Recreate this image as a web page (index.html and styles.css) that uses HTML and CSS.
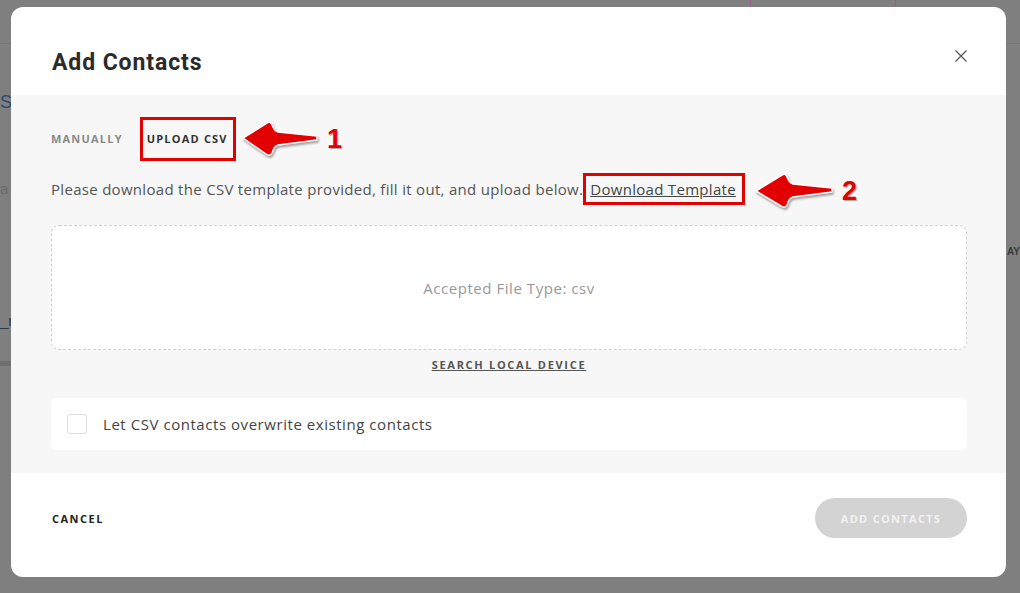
FILE: index.html
```html
<!DOCTYPE html>
<html lang="en">
<head>
<meta charset="utf-8">
<title>Add Contacts</title>
<link rel="stylesheet" href="styles.css">
</head>
<body>
<div class="backdrop">
  <div class="bg-topbar"></div>
  <div class="bg-circle"></div>
  <div class="bg-s">S</div>
  <div class="bg-a">a</div>
  <div class="bg-r">_r</div>
  <div class="bg-band"></div>
  <div class="bg-ay">AY</div>

  <div class="modal">
    <header class="modal-header">
      <h1 class="title">Add Contacts</h1>
      <button class="close" aria-label="Close">
        <svg width="12" height="12" viewBox="0 0 12 12"><path d="M0.5 0.5 L11.5 11.5 M11.5 0.5 L0.5 11.5" stroke="#555" stroke-width="1.2" fill="none"/></svg>
      </button>
    </header>

    <section class="modal-body">
      <div class="tabs">
        <span class="tab">MANUALLY</span>
        <span class="tab tab-active">UPLOAD CSV</span>
      </div>

      <div class="desc">
        <span>Please download the CSV template provided, fill it out, and upload below.</span>
        <a class="template-link">Download Template</a>
      </div>

      <div class="dropzone">Accepted File Type: csv</div>
      <a class="search-link">SEARCH LOCAL DEVICE</a>

      <label class="check-card">
        <span class="checkbox"></span>
        <span class="check-label">Let CSV contacts overwrite existing contacts</span>
      </label>

      <div class="anno anno-1">
        <svg width="80" height="40" viewBox="0 0 80 40" class="arrow">
          <path d="M2 19 L26 4 Q30 2 31 6 L33 10 Q34 12 37 13 L76 17 L76 21 L37 26 Q34 27 33 29 L31 34 Q29 38 25 35 Z"/>
        </svg>
        <span class="num">1</span>
      </div>
      <div class="anno anno-2">
        <svg width="82" height="40" viewBox="0 0 82 40" class="arrow">
          <path d="M2 20 L28 4 Q32 2 33 6 L35 10 Q36 12 39 13 L78 17 L78 21 L39 26 Q36 27 35 29 L33 34 Q31 38 27 35 Z"/>
        </svg>
        <span class="num">2</span>
      </div>
    </section>

    <footer class="modal-footer">
      <button class="cancel">CANCEL</button>
      <button class="submit" disabled>ADD CONTACTS</button>
    </footer>
  </div>
</div>
</body>
</html>
```

FILE: styles.css
```css
* { box-sizing: border-box; }
html, body { margin: 0; padding: 0; }
body {
  width: 1020px;
  height: 593px;
  overflow: hidden;
  font-family: "Open Sans", "Liberation Sans", sans-serif;
}
.backdrop {
  position: relative;
  width: 1020px;
  height: 593px;
  background: #7f7f7f;
  padding: 7px 14px 16px 11px;
}
.bg-topbar {
  position: absolute; left: 0; top: 43px; width: 1020px; height: 1px; background: #767676;
}
.bg-circle {
  position: absolute; left: 750px; top: -60px; width: 146px; height: 120px;
  border-radius: 50%; border: 1px solid #9a5a8a;
}
.bg-s { position: absolute; left: 0; top: 92px; color: #2a4b78; font: 18px "Liberation Sans", sans-serif; }
.bg-a { position: absolute; left: 0; top: 180px; color: #6a6a6a; font: 15px "Liberation Sans", sans-serif; }
.bg-r { position: absolute; left: 0; top: 312px; color: #2a3a50; font: 15px "Liberation Sans", sans-serif; }
.bg-band { position: absolute; left: 0; top: 361px; width: 11px; height: 5px; background: #6f6f6f; }
.bg-ay { position: absolute; left: 1007px; top: 246px; color: #3a3a3a; font: bold 10px "Liberation Sans", sans-serif; }

.modal {
  position: relative;
  width: 995px;
  height: 570px;
  background: #fff;
  border-radius: 12px;
  overflow: hidden;
  display: flex;
  flex-direction: column;
}
.modal-header {
  height: 88px;
  display: flex;
  align-items: center;
  justify-content: space-between;
  padding: 0 39px 0 41px;
}
.title {
  margin: 0;
  font-family: "Roboto", "Liberation Sans", sans-serif;
  font-size: 23px;
  font-weight: 700;
  color: #2b2b2b;
  letter-spacing: 0.9px;
  padding-top: 22px;
}
.close {
  border: 0; background: none; padding: 0; width: 12px; height: 12px; display: flex;
  margin-top: 10px;
}
.modal-body {
  position: relative;
  background: #f7f7f7;
  padding: 22px 39px 23px 40px;
  flex: 0 0 378px;
}
.tabs {
  display: flex;
  align-items: center;
  height: 44px;
}
.tab {
  font-size: 11px;
  font-weight: 700;
  letter-spacing: 1.2px;
  color: #8a8a8a;
  line-height: 14px;
}
.tab-active {
  color: #333;
  margin-left: 17px;
  padding: 12px 5px 12px 4px;
  border: 3px solid #e20000;
  height: 44px;
  display: flex; align-items: center;
}
.desc {
  display: flex;
  align-items: center;
  height: 32px;
  margin-top: 12px;
  font-size: 15px;
  letter-spacing: 0.3px;
  color: #555;
  white-space: nowrap;
}
.template-link {
  color: #444;
  text-decoration: underline;
  border: 3px solid #e20000;
  padding: 3px 6px 3px 4px;
  height: 32px;
  display: flex; align-items: center;
  margin-left: 0;
}
.dropzone {
  margin-top: 20px;
  height: 125px;
  background: #fff;
  border: 1px dashed #cfcfcf;
  border-radius: 8px;
  display: flex;
  align-items: center;
  justify-content: center;
  font-size: 15px;
  letter-spacing: 0.55px;
  color: #999;
  padding-top: 0;
}
.search-link {
  display: block;
  width: max-content;
  margin: 8px auto 0;
  font-size: 11px;
  line-height: 14px;
  font-weight: 700;
  letter-spacing: 1.7px;
  color: #555;
  text-decoration: underline;
}
.check-card {
  margin-top: 26px;
  height: 52px;
  background: #fff;
  border-radius: 6px;
  display: flex;
  align-items: center;
  padding-left: 16px;
}
.checkbox {
  width: 20px; height: 20px;
  border: 1px solid #ddd;
  border-radius: 3px;
  background: #fff;
}
.check-label {
  margin-left: 16px;
  font-size: 15px;
  letter-spacing: 0.55px;
  color: #444;
}
.anno { position: absolute; display: flex; align-items: center; }
.anno-1 { left: 230px; top: 24px; }
.anno-2 { left: 743px; top: 76px; }
.arrow path {
  fill: #e20000;
  stroke: #fff;
  stroke-width: 1.5;
  stroke-linejoin: round;
}
.arrow { filter: drop-shadow(1px 2px 1px rgba(0,0,0,0.35)); }
.num {
  font-family: "Liberation Sans", sans-serif;
  font-weight: 700;
  font-size: 27px;
  color: #e20000;
  -webkit-text-stroke: 1.2px #fff;
  paint-order: stroke fill;
  text-shadow: 1px 1px 1px rgba(0,0,0,0.35);
  margin-left: 6px;
}
.modal-footer {
  flex: 1;
  display: flex;
  align-items: center;
  justify-content: space-between;
  padding: 0 39px 14px 41px;
}
.cancel {
  border: 0; background: none; padding: 0;
  font-family: "Open Sans", "Liberation Sans", sans-serif;
  font-size: 11px;
  font-weight: 700;
  letter-spacing: 1.5px;
  color: #222;
}
.submit {
  width: 152px; height: 40px;
  border: 0;
  border-radius: 20px;
  background: #d3d3d3;
  color: #f2f2f2;
  font-family: "Open Sans", "Liberation Sans", sans-serif;
  font-size: 11px;
  font-weight: 700;
  letter-spacing: 1.3px;
}
```
